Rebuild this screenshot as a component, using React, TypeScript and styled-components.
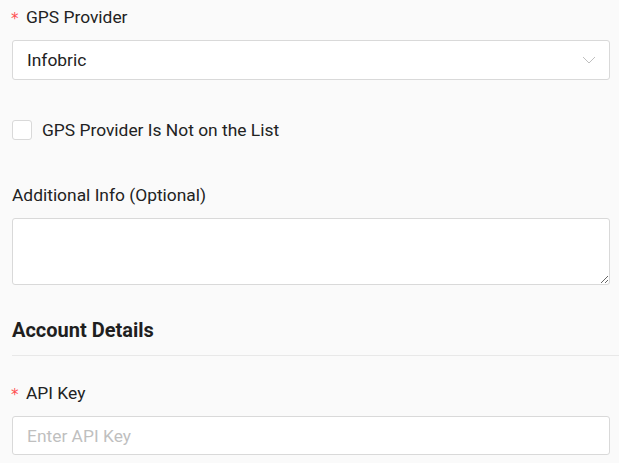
import styled, { createGlobalStyle } from "styled-components";

const GlobalStyle = createGlobalStyle`
  body {
    margin: 0;
    background: #fafafa;
    font-family: Roboto, "Liberation Sans", sans-serif;
    color: #222;
  }
`;

export default function App() {
  return (
    <>
      <GlobalStyle />
      <Page>
        <Field>
          <Label required>GPS Provider</Label>
          <SelectBox>
            <span>Infobric</span>
            <Chevron width="14" height="8" viewBox="0 0 14 8">
              <path d="M1 1l6 6 6-6" fill="none" stroke="#bfbfbf" strokeWidth="1" />
            </Chevron>
          </SelectBox>
        </Field>
        <CheckRow>
          <CheckBox />
          <span>GPS Provider Is Not on the List</span>
        </CheckRow>
        <Field>
          <Label>Additional Info (Optional)</Label>
          <TextArea />
        </Field>
        <SectionTitle>Account Details</SectionTitle>
        <Divider />
        <Field>
          <Label required>API Key</Label>
          <TextInput placeholder="Enter API Key" />
        </Field>
      </Page>
    </>
  );
}

const Page = styled.div`
  padding: 5px 9px 0 12px;
  display: flex;
  flex-direction: column;
`;

const Field = styled.div`
  display: flex;
  flex-direction: column;
  gap: 11px;
`;

const Label = styled.div<{ required?: boolean }>`
  font-size: 17.4px;
  line-height: 24px;
  height: 24px;
  color: #222;
  &::before {
    content: ${(p) => (p.required ? '"*"' : '""')};
    display: ${(p) => (p.required ? "inline-block" : "none")};
    width: 15px;
    margin-left: -1px;
    color: #ff4d4f;
    font-family: "DejaVu Sans", sans-serif;
    font-size: 15px;
    line-height: 24px;
    vertical-align: top;
    position: relative;
    top: 2px;
  }
`;

const boxBase = `
  box-sizing: border-box;
  width: 100%;
  background: #fff;
  border: 1px solid #d9d9d9;
  border-radius: 3px;
  font-family: Roboto, "Liberation Sans", sans-serif;
  font-size: 17.4px;
  color: #222;
`;

const SelectBox = styled.div`
  ${boxBase}
  height: 40px;
  display: flex;
  align-items: center;
  justify-content: space-between;
  padding: 0 13px 0 14px;
`;

const Chevron = styled.svg`
  display: block;
`;

const CheckRow = styled.label`
  display: flex;
  align-items: center;
  gap: 10px;
  font-size: 17.4px;
  line-height: 24px;
  margin: 38px 0 41px;
`;

const CheckBox = styled.span`
  box-sizing: border-box;
  width: 20px;
  height: 20px;
  background: #fff;
  border: 1px solid #d9d9d9;
  border-radius: 3px;
`;

const TextArea = styled.textarea`
  ${boxBase}
  height: 67px;
  resize: vertical;
  display: block;
`;

const SectionTitle = styled.div`
  font-size: 20px;
  font-weight: 700;
  line-height: 26px;
  color: #1f1f1f;
  margin-top: 32px;
`;

const Divider = styled.hr`
  border: none;
  border-top: 1px solid #e8e8e8;
  margin: 12px -9px 25px 0;
`;

const TextInput = styled.input`
  ${boxBase}
  height: 39px;
  padding: 0 14px;
  outline: none;
  &::placeholder {
    color: #bfbfbf;
  }
`;
